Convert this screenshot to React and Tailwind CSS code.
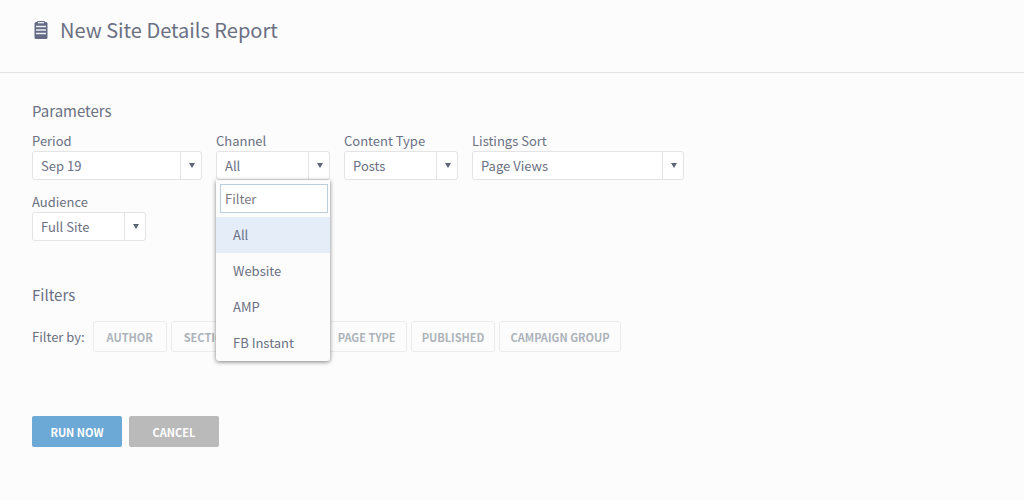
import React, { useState } from "react";

const channels = ["All", "Website", "AMP", "FB Instant"];
const filters = ["Author", "Section", "Tag", "Page Type", "Published", "Campaign Group"];

const ReportIcon = () => (
  <svg width="14" height="18" viewBox="0 0 14 18" aria-hidden="true">
    <rect x="0.5" y="1" width="13" height="17" rx="1.5" fill="#656b84" />
    <rect x="3" y="0" width="8" height="3" rx="1" fill="#656b84" />
    <rect x="4" y="1" width="6" height="1.3" fill="#f4f4f7" />
    <path d="M2 5.5h10M2 9h10M2 12.5h10" stroke="#eceef3" strokeWidth="1.6" />
  </svg>
);

const SelectField = ({ id, label, width, options, value, onChange, onOpen, children }) => (
  <div className={`relative ${width}`}>
    <label htmlFor={id} className="block text-[13px] leading-5">{label}</label>
    <div className="relative">
      <select
        id={id}
        value={value}
        onChange={(e) => onChange?.(e.target.value)}
        onMouseDown={(e) => {
          if (!onOpen) return;
          e.preventDefault();
          onOpen();
        }}
        className="block h-[29px] w-full appearance-none rounded-[3px] border border-[#e4e4e4] bg-white pl-2 pr-6 text-[13px] leading-5 outline-none"
      >
        {options.map((option) => <option key={option}>{option}</option>)}
      </select>
      <span className="pointer-events-none absolute inset-y-0 right-0 flex w-[22px] items-center justify-center border-l border-[#e4e4e4]">
        <svg width="6" height="5" viewBox="0 0 6 5" aria-hidden="true">
          <path d="M0 0h6L3 5z" fill="#5d6379" />
        </svg>
      </span>
    </div>
    {children}
  </div>
);

const ChannelMenu = ({ selected, onSelect }) => {
  const [query, setQuery] = useState("");
  const visible = channels.filter((c) => c.toLowerCase().includes(query.toLowerCase()));

  return (
    <div className="absolute inset-x-0 top-full z-10 rounded-b-[3px] bg-[#fcfcfc] pt-1 shadow-[0_1px_4px_rgba(0,0,0,0.5)]">
      <div className="pl-1 pr-0.5">
        <input
          type="text"
          aria-label="Filter channels"
          placeholder="Filter"
          value={query}
          onChange={(e) => setQuery(e.target.value)}
          className="block h-[29px] w-full border border-[#b9cfe0] bg-white px-1 text-[13px] leading-5 outline-none placeholder:text-[#7b7b7f]"
        />
      </div>
      <ul className="mt-1">
        {visible.map((channel) => (
          <li key={channel}>
            <button
              type="button"
              onClick={() => onSelect(channel)}
              className={`block h-9 w-full pl-[17px] text-left text-[13px] leading-5 ${channel === selected ? "bg-[#e5edf9]" : "hover:bg-[#f1f5fb]"}`}
            >
              {channel}
            </button>
          </li>
        ))}
      </ul>
    </div>
  );
};

const App = () => {
  const [channel, setChannel] = useState("All");
  const [menuOpen, setMenuOpen] = useState(true);
  const [active, setActive] = useState([]);

  const toggleFilter = (name) => {
    setActive(active.includes(name) ? active.filter((f) => f !== name) : [...active, name]);
  };

  const pickChannel = (name) => {
    setChannel(name);
    setMenuOpen(false);
  };

  return (
    <div className="min-h-screen bg-[#fcfcfc] font-['Noto_Sans_CJK_SC','Open_Sans',sans-serif] text-[#6b7083]">
      <header className="flex items-center gap-3 border-b border-[#e3e3e3] px-8 pt-4 pb-7">
        <div className="flex w-4 justify-end"><ReportIcon /></div>
        <h1 className="text-xl leading-7">New Site Details Report</h1>
      </header>

      <main className="px-8 pt-7">
        <section>
          <h2 className="text-[15px] leading-5">Parameters</h2>
          <div className="mt-2.5 flex max-w-3xl flex-wrap gap-x-3.5 gap-y-3">
            <SelectField id="period" label="Period" width="w-[170px]" options={["Sep 19"]} />
            <SelectField
              id="channel"
              label="Channel"
              width="w-[114px]"
              options={channels}
              value={channel}
              onChange={setChannel}
              onOpen={() => setMenuOpen(!menuOpen)}
            >
              {menuOpen && <ChannelMenu selected={channel} onSelect={pickChannel} />}
            </SelectField>
            <SelectField id="content-type" label="Content Type" width="w-[114px]" options={["Posts"]} />
            <SelectField id="sort" label="Listings Sort" width="w-[212px]" options={["Page Views"]} />
            <SelectField id="audience" label="Audience" width="w-[114px]" options={["Full Site"]} />
          </div>
        </section>

        <section className="mt-11">
          <h2 className="text-[15px] leading-5">Filters</h2>
          <div className="mt-4 flex flex-wrap items-center gap-1">
            <span className="mr-1 text-[13px] leading-5">Filter by:</span>
            {filters.map((name) => (
              <button
                key={name}
                type="button"
                onClick={() => toggleFilter(name)}
                className={`h-[31px] min-w-[74px] rounded-[3px] border px-2.5 text-[11px] leading-4 font-bold uppercase ${active.includes(name) ? "border-[#6ca9d6] text-[#6ca9d6]" : "border-[#ececec] text-[#adb3ba]"}`}
              >
                {name}
              </button>
            ))}
          </div>
        </section>

        <div className="mt-16 flex gap-[7px] pb-8">
          <button type="button" className="h-[31px] w-[90px] rounded-[2px] bg-[#6ca9d6] text-[11px] leading-4 font-bold text-white uppercase">
            Run Now
          </button>
          <button type="button" className="h-[31px] w-[90px] rounded-[2px] bg-[#bababa] text-[11px] leading-4 font-bold text-white uppercase">
            Cancel
          </button>
        </div>
      </main>
    </div>
  );
};

export default App;
